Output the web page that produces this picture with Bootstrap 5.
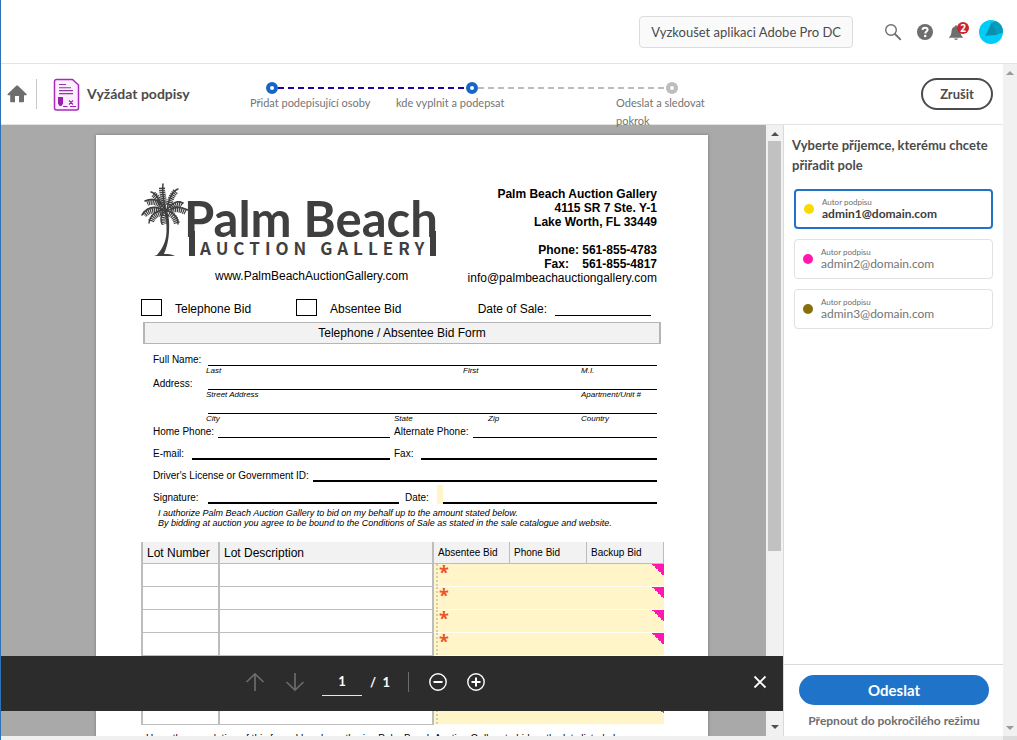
<!DOCTYPE html>
<html lang="cs">
<head>
<meta charset="utf-8">
<meta name="viewport" content="width=device-width, initial-scale=1">
<title>Vyžádat podpisy</title>
<link href="https://cdn.jsdelivr.net/npm/bootstrap@5.3.0/dist/css/bootstrap.min.css" rel="stylesheet">
<style>
  :root { --ui: Lato, "Open Sans", sans-serif; --doc: "Liberation Sans", Arial, sans-serif; --blue: #1f74c9; --line: #e3e3e3; }
  body { font-family: var(--ui); font-size: 13px; line-height: 18px; color: #4b4b4b; border-left: 1px solid #2b73b4; overflow: hidden; }
  .icon-btn { border: 0; padding: 0; background: none; line-height: 0; color: #6e6e6e; }

  /* top bar */
  .topbar { height: 64px; border-bottom: 1px solid var(--line); padding-right: 14px; gap: 15px; }
  .try-btn { height: 32px; padding: 0 11px; border: 1px solid #dcdcdc; border-radius: 4px; background: #fafafa; color: #4b4b4b; font-size: 13px; margin-right: 16px; }
  .count { top: -1px; right: -5px; width: 12px; height: 12px; border-radius: 50%; background: #c9252d; color: #fff; font: bold 10px/12px "Open Sans", sans-serif; text-align: center; }

  /* task bar */
  .taskbar { height: 61px; border-bottom: 1px solid var(--line); z-index: 2; padding: 0 10px 0 6px; }
  .divider { width: 1px; height: 30px; background: #c8c8c8; margin: 0 16px 0 9px; }
  .task-title { font-size: 14px; line-height: 18px; font-weight: 700; margin: 0 0 0 7px; width: 163px; }
  .stepper { flex: 0 1 478px; margin-top: 18px; }
  .track { padding: 0 50px 0 16px; height: 12px; }
  .dot { width: 12px; height: 12px; border-radius: 50%; border: 4px solid #1765c7; background: #fff; }
  .dot.todo { border-color: #bcbcbc; }
  .dash { height: 2px; background: repeating-linear-gradient(90deg, #1900a8 0 6px, transparent 6px 10px); }
  .dash.todo { background: repeating-linear-gradient(90deg, #bcbcbc 0 6px, transparent 6px 10px); }
  .steps { font-size: 11px; line-height: 18px; color: #747474; }
  .steps li:nth-child(1) { flex: 0 0 146px; }
  .steps li:nth-child(2) { flex: 0 0 220px; }
  .steps li:nth-child(3) { flex: 0 0 100px; }
  .cancel { height: 32px; width: 72px; border: 2px solid #4b4b4b; border-radius: 16px; background: #fff; color: #4b4b4b; font-weight: 700; font-size: 13px; padding: 0; }

  /* scrollbars */
  .bar { background: #f1f1f1; color: #505050; }
  .bar-in { width: 17px; padding: 7px 2px; }
  .bar-out { width: 14px; color: #9a9a9a; padding: 7px 0 6px; }
  .thumb { width: 13px; flex: 0 1 410px; background: #c1c1c1; margin-top: 5px; }
  .arrow-up { border: 4px solid transparent; border-top: 0; border-bottom-color: currentColor; height: 4px; }
  .arrow-down { border: 4px solid transparent; border-bottom: 0; border-top-color: currentColor; height: 4px; }
  .strip { height: 4px; background: #f0f0f0; }
  .corner { width: 14px; background: #dcdcdc; }

  /* document */
  .desk { background: #a9a9a9; padding: 10px 0 0 95px; }
  .sheet { width: 612px; background: #fff; box-shadow: 0 0 3px #777; padding: 46px 43px 60px 45px; color: #000; font: 12px/14px var(--doc); }
  .logo-word { font-family: Lato, "Open Sans", sans-serif; }
  .logo-sub { font-family: "Noto Sans CJK SC", "Noto Sans", sans-serif; }
  .site { margin: 12px 0 0 74px; }
  .contact { font-weight: 700; margin: 6px 8px 0 0; }
  .tick { appearance: none; width: 21px; height: 17px; border: 1px solid #000; background: #fff; margin: 0 13px 0 0; }
  .options { margin-top: 14px; }
  .opt { width: 155px; }
  .blank { flex: 1 1 0; min-width: 0; height: 10px; border: 0; border-bottom: 1px solid #000; padding: 0; background: none; border-radius: 0; }
  .blank.sale { flex: 0 0 96px; margin-right: 14px; }
  .thick .blank { border-bottom-width: 2px; }
  .banner { height: 22px; margin: 6px 4px 0 2px; border: 1px solid #b5b5b5; border-width: 1px 2px; background: #f2f2f2; line-height: 20px; }
  .entries { font-size: 10px; line-height: 10px; padding: 0 8px 0 12px; }
  .entries .line { display: flex; align-items: end; height: 14px; }
  .entries .line label { padding-bottom: 1px; white-space: nowrap; }
  .entries .lead-label { width: 55px; }
  .entries .tall { height: 22px; }
  .hints { font-size: 8px; line-height: 10px; height: 10px; font-style: italic; padding-left: 53px; }
  .half { width: 241px; }
  .half-wide { width: 252px; padding-right: 6px; }
  .fill-date { width: 6px; height: 19px; background: #fff5c8; }
  .terms { font-size: 9px; line-height: 10px; font-style: italic; padding-left: 17px; margin: 4px 0 0; }
  .lots { margin-top: 14px; width: 523px; table-layout: fixed; border-collapse: separate; border-spacing: 0; border-left: 2px solid #bdbdbd; }
  .lots th { height: 22px; padding: 0 0 0 4px; font-weight: 400; background: #f2f2f2; border-bottom: 1px solid #bdbdbd; }
  .lots th, .lots .plain { border-right: 2px solid #bdbdbd; }
  .lots .small-head { font-size: 10px; border-right-width: 1px; }
  .lots td { height: 23px; padding: 0; border-bottom: 1px solid #bdbdbd; }
  .lots .ask { background: linear-gradient(45deg, transparent 50%, #ff17b0 50%) right top / 12px 12px no-repeat, #fff5c8; border-bottom-color: #fffdf2; }
  .ask-in { height: 22px; margin-left: 2px; border-left: 2px dotted #d5cfae; padding: 0 0 0 1px; color: #e9552b; font: bold 18px/16px "Open Sans", sans-serif; }
  .fine { font-size: 10px; line-height: 12px; margin: 8px 0 0 5px; white-space: nowrap; }

  /* page controls over the document */
  .pager { left: 0; right: 0; bottom: 25px; height: 55px; background: #2c2c2c; color: #fff; padding: 0 16px 4px 244px; font-weight: 700; font-size: 13px; }
  .pager .icon-btn { color: #fff; }
  .pager .icon-btn:disabled { color: #6b6b6b; }
  .page-no { width: 40px; height: 27px; margin: 2px 8px 0 17px; border: 0; border-bottom: 1px solid #e6e6e6; background: none; color: #fff; text-align: center; font: inherit; padding: 0 0 3px; }
  .sep { width: 1px; height: 20px; background: #6b6b6b; margin: 0 20px 0 18px; }

  /* recipients */
  .side { width: 220px; border-left: 1px solid #dadada; background: #fff; }
  .side h2 { font-size: 13px; line-height: 20px; font-weight: 700; margin: 10px 0 14px 8px; }
  .people { padding: 0 10px; gap: 10px; }
  .person { height: 40px; border: 1px solid #e1e1e1; border-radius: 4px; background: #fff; padding: 0 8px; gap: 8px; color: #747474; font-size: 12px; line-height: 14px; }
  .person small { display: block; font-size: 8px; line-height: 10px; color: #6e6e6e; font-weight: 400; }
  .person.chosen { border: 2px solid var(--blue); color: #3c3c3c; font-weight: 700; }
  .spot { width: 10px; height: 10px; border-radius: 50%; }
  .send-area { border-top: 1px solid #dadada; padding: 10px 14px 6px 15px; height: 72px; }
  .send { height: 30px; border: 0; border-radius: 15px; background: var(--blue); color: #fff; font-size: 15px; line-height: 20px; font-weight: 700; }
  .advanced { color: #6e6e6e; font-size: 12px; font-weight: 700; line-height: 18px; margin-top: 7px; text-decoration: none; white-space: nowrap; }
</style>
</head>
<body class="vh-100 d-flex flex-column bg-white">

<header class="topbar d-flex align-items-center justify-content-end flex-shrink-0">
  <button class="try-btn" type="button">Vyzkoušet aplikaci Adobe Pro DC</button>
  <button class="icon-btn" type="button" aria-label="Hledat">
    <svg width="18" height="18" viewBox="0 0 18 18" fill="none" stroke="currentColor"><circle cx="7" cy="7" r="5.3" stroke-width="1.4"/><path d="M11 11l5.3 5.3" stroke-width="1.8" stroke-linecap="round"/></svg>
  </button>
  <button class="icon-btn" type="button" aria-label="Nápověda">
    <svg width="16" height="16" viewBox="0 0 16 16"><circle cx="8" cy="8" r="8" fill="currentColor"/><path d="M5.500 5.900C5.600 4.400 6.600 3.700 8.100 3.700c1.500 0 2.500.8 2.500 2.100 0 1.800-2.300 1.800-2.300 3.700" fill="none" stroke="#fff" stroke-width="2"/><circle cx="8.200" cy="12" r="1.300" fill="#fff"/></svg>
  </button>
  <button class="icon-btn position-relative" type="button" aria-label="Oznámení">
    <svg width="16" height="18" viewBox="0 0 16 18" fill="currentColor"><path d="M1 14.300c2-1.700 2.300-3 2.500-6C3.700 5.500 5 3.900 7 3.400c0-1.500 2-1.500 2 0 2 .5 3.300 2.100 3.500 4.900.2 3 .5 4.300 2.500 6v.4H1z"/><path d="M6 15.600h4c-.3 1.900-3.700 1.900-4 0z"/></svg>
    <span class="count position-absolute">2</span>
  </button>
  <button class="icon-btn" type="button" aria-label="Profil">
    <svg width="24" height="24" viewBox="0 0 24 24"><circle cx="12" cy="12" r="12" fill="#00cdf7"/><path d="M12.500 3l4-2.100A12 12 0 0 1 24 12.500L18 14.500 6.500 15.500z" fill="#079bbd"/><path d="M12.500 3L18 15 6.500 15.500z" fill="#0b8fae"/></svg>
  </button>
</header>

<div class="d-flex flex-grow-1 overflow-hidden">
  <div class="d-flex flex-column flex-grow-1 overflow-hidden">

    <nav class="taskbar position-relative d-flex align-items-center flex-shrink-0" aria-label="Postup">
      <button class="icon-btn" type="button" aria-label="Domů">
        <svg width="20" height="18" viewBox="0 0 20 18"><path d="M9.500.6a1 1 0 0 1 1.200 0L19.500 9c.5.500.3 1.200-.4 1.200H17v6.300c0 .5-.3.800-.8.800H12V11H8v6.300H4c-.5 0-.8-.3-.8-.8v-6.300H1.100C.4 10.200.2 9.500.7 9z" fill="currentColor"/></svg>
      </button>
      <span class="divider"></span>
      <svg width="27" height="33" viewBox="0 0 27 33"><path d="M3 1.500h16.500L25.500 7v23a2 2 0 0 1-2 2H3.500a2 2 0 0 1-2-2V3.500a2 2 0 0 1 2-2z" fill="#fdeeff" stroke="#a62bb8" stroke-width="1.500"/><path d="M6 6.500h7M6 9.700h12M6 12.600h14M6 15.600h14" stroke="#8c3aa0" stroke-width="1.100"/><path d="M5 19h5v6.500L8.500 28H6.500L5 25.500z" fill="#9c1fb3"/><path d="M10 28.500h4.500M17 28.500h6M16 22.500l4 4m0-4l-4 4" stroke="#9c1fb3" stroke-width="1.100" fill="none"/></svg>
      <h1 class="task-title">Vyžádat podpisy</h1>
      <div class="stepper align-self-start">
        <div class="track d-flex align-items-center">
          <span class="dot"></span><span class="dash flex-fill"></span><span class="dot"></span><span class="dash todo flex-fill"></span><span class="dot todo"></span>
        </div>
        <ol class="steps list-unstyled d-flex mb-0">
          <li>Přidat podepisující osoby</li><li>kde vyplnit a podepsat</li><li>Odeslat a sledovat pokrok</li>
        </ol>
      </div>
      <button class="cancel ms-auto flex-shrink-0" type="button">Zrušit</button>
    </nav>

    <div class="d-flex flex-grow-1 overflow-hidden">
      <main class="position-relative d-flex flex-grow-1 overflow-hidden">
        <div class="desk flex-grow-1 overflow-hidden">
          <article class="sheet">
            <div class="d-flex justify-content-between">
              <div>
                <svg class="d-block" width="298" height="76" viewBox="0 0 298 76" fill="#3f3f3f">
                  <path d="M16 74c6-7 9-14 9.500-23 .3-8-.5-14-2.500-21l3-1c2 7 2.600 13 2 22-.6 10-2.500 16-5 22 4 0 8 .3 11 2H13z"/>
                  <g fill="none" stroke="#3f3f3f" stroke-linecap="round">
                    <path stroke-width="1.500" d="M25 30C18 18 12 17 4 20M24 30C14 24 6 26 1 34M24 30C16 28 9 34 8 42M25 30C20 32 19 38 21 43M25 30C22 18 21 10 22 3M26 29C28 16 32 10 37 8M26 29C32 21 38 19 42 22M26 30C34 25 41 26 47 29M26 30C32 31 37 36 37 43M24 29C19 20 15 12 10 11"/>
                    <path stroke-width="6" stroke-dasharray="1.300 .700" stroke-linecap="butt" d="M23 27C16 20 11 20 6 22M22 30C13 27 7 30 3 34M22 32C15 32 11 37 10 41M26 33C23 36 23 40 24 43M24 24C22 16 21 11 21 6M28 24C30 16 32 13 35 10M29 27C34 23 38 22 41 24M30 29C36 27 41 29 45 31M28 32C32 34 35 38 36 43M22 25C18 19 15 15 12 13"/>
                  </g>
                  <g font-weight="700">
                    <text class="logo-word" x="43" y="56" font-size="49">Palm Beach</text>
                    <text class="logo-sub" x="59" y="74" font-size="17" letter-spacing="5">AUCTION GALLERY</text>
                  </g>
                  <path d="M48 50h6v25h-6zM289 50h6v25h-6z"/>
                </svg>
                <div class="site">www.PalmBeachAuctionGallery.com</div>
              </div>
              <address class="contact text-end mb-0">
                Palm Beach Auction Gallery<br>4115 SR 7 Ste. Y-1<br>Lake Worth, FL 33449<br><br>Phone: 561-855-4783<br>Fax: &nbsp;&nbsp; 561-855-4817<br><span class="fw-normal">info@palmbeachauctiongallery.com</span>
              </address>
            </div>
            <div class="options d-flex align-items-end">
              <label class="opt d-flex align-items-end" for="tel"><input class="tick" id="tel" type="checkbox">Telephone Bid</label>
              <label class="opt d-flex align-items-end" for="abs"><input class="tick" id="abs" type="checkbox">Absentee Bid</label>
              <label class="ms-auto pe-2" for="sale">Date of Sale:</label>
              <input class="blank sale" id="sale" type="text">
            </div>
            <div class="banner text-center">Telephone / Absentee Bid Form</div>

            <div class="entries">
              <div class="line tall"><label class="lead-label" for="name">Full Name:</label><input class="blank" id="name" type="text"></div>
              <div class="hints d-flex"><span style="width:257px">Last</span><span style="width:118px">First</span><span>M.I.</span></div>
              <div class="line"><label class="lead-label" for="street">Address:</label><input class="blank" id="street" type="text"></div>
              <div class="hints d-flex"><span style="width:375px">Street Address</span><span>Apartment/Unit #</span></div>
              <div class="line"><span class="lead-label"></span><input class="blank" type="text" aria-label="City"></div>
              <div class="hints d-flex"><span style="width:188px">City</span><span style="width:94px">State</span><span style="width:93px">Zip</span><span>Country</span></div>
              <div class="line"><div class="half line pe-1"><label class="pe-1" for="home">Home Phone:</label><input class="blank" id="home" type="text"></div><label class="pe-1" for="alt">Alternate Phone:</label><input class="blank" id="alt" type="text"></div>
              <div class="line tall thick"><div class="half line pe-1"><label class="pe-2" for="mail">E-mail:</label><input class="blank" id="mail" type="text"></div><label class="pe-2" for="fax">Fax:</label><input class="blank" id="fax" type="text"></div>
              <div class="line tall thick"><label class="pe-1" for="gov">Driver's License or Government ID:</label><input class="blank" id="gov" type="text"></div>
              <div class="line tall thick"><div class="half-wide line"><label class="lead-label" for="sign">Signature:</label><input class="blank" id="sign" type="text"></div><label class="pe-2" for="day">Date:</label><span class="fill-date"></span><input class="blank" id="day" type="text"></div>
            </div>
            <p class="terms">I authorize Palm Beach Auction Gallery to bid on my behalf up to the amount stated below.<br>By bidding at auction you agree to be bound to the Conditions of Sale as stated in the sale catalogue and website.</p>

            <table class="lots">
              <colgroup><col style="width:77px"><col style="width:214px"><col style="width:76px"><col style="width:77px"><col></colgroup>
              <thead><tr><th>Lot Number</th><th>Lot Description</th><th class="small-head">Absentee Bid</th><th class="small-head">Phone Bid</th><th class="small-head">Backup Bid</th></tr></thead>
              <tbody>
                <tr><td class="plain"></td><td class="plain"></td><td class="ask" colspan="3"><div class="ask-in">*</div></td></tr>
                <tr><td class="plain"></td><td class="plain"></td><td class="ask" colspan="3"><div class="ask-in">*</div></td></tr>
                <tr><td class="plain"></td><td class="plain"></td><td class="ask" colspan="3"><div class="ask-in">*</div></td></tr>
                <tr><td class="plain"></td><td class="plain"></td><td class="ask" colspan="3"><div class="ask-in">*</div></td></tr>
                <tr><td class="plain"></td><td class="plain"></td><td class="ask" colspan="3"><div class="ask-in">*</div></td></tr>
                <tr><td class="plain"></td><td class="plain"></td><td class="ask" colspan="3"><div class="ask-in">*</div></td></tr>
                <tr><td class="plain"></td><td class="plain"></td><td class="ask" colspan="3"><div class="ask-in">*</div></td></tr>
              </tbody>
            </table>
            <p class="fine">Upon the completion of this form, I hereby authorize Palm Beach Auction Gallery to bid on the lots listed above.</p>
          </article>
        </div>
        <div class="bar bar-in d-flex flex-column align-items-center flex-shrink-0">
          <span class="arrow-up"></span><span class="thumb"></span><span class="arrow-down mt-auto"></span>
        </div>

        <div class="pager position-absolute d-flex align-items-center">
          <button class="icon-btn" type="button" disabled aria-label="Předchozí stránka"><svg width="20" height="20" viewBox="0 0 20 20" fill="none" stroke="currentColor" stroke-width="1.700"><path d="M10 19V2M1.500 10L10 2l8.500 8"/></svg></button>
          <button class="icon-btn ms-3 ps-1" type="button" disabled aria-label="Další stránka"><svg width="20" height="20" viewBox="0 0 20 20" fill="none" stroke="currentColor" stroke-width="1.700"><path d="M10 1v17M1.500 10l8.500 8 8.500-8"/></svg></button>
          <input class="page-no" type="text" value="1" aria-label="Stránka"><span>/&nbsp; 1</span>
          <span class="sep"></span>
          <button class="icon-btn" type="button" aria-label="Zmenšit"><svg width="18" height="18" viewBox="0 0 18 18" fill="none" stroke="currentColor"><circle cx="9" cy="9" r="8.200" stroke-width="1.400"/><path d="M4.500 9h9" stroke-width="2"/></svg></button>
          <button class="icon-btn ms-3 ps-1" type="button" aria-label="Zvětšit"><svg width="18" height="18" viewBox="0 0 18 18" fill="none" stroke="currentColor"><circle cx="9" cy="9" r="8.200" stroke-width="1.400"/><path d="M4.500 9h9M9 4.500v9" stroke-width="2"/></svg></button>
          <button class="icon-btn ms-auto" type="button" aria-label="Zavřít"><svg width="14" height="14" viewBox="0 0 14 14" fill="none" stroke="currentColor" stroke-width="1.800"><path d="M1.500 1.500l11 11m0-11l-11 11"/></svg></button>
        </div>
      </main>

      <aside class="side d-flex flex-column flex-shrink-0">
        <h2>Vyberte příjemce, kterému chcete přiřadit pole</h2>
        <div class="people d-flex flex-column">
          <button class="person chosen d-flex align-items-center text-start" type="button"><span class="spot" style="background:#fada00"></span><span><small>Autor podpisu</small>admin1@domain.com</span></button>
          <button class="person d-flex align-items-center text-start" type="button"><span class="spot" style="background:#ff17b0"></span><span><small>Autor podpisu</small>admin2@domain.com</span></button>
          <button class="person d-flex align-items-center text-start" type="button"><span class="spot" style="background:#86700a"></span><span><small>Autor podpisu</small>admin3@domain.com</span></button>
        </div>
        <div class="send-area mt-auto d-flex flex-column">
          <button class="send w-100" type="button">Odeslat</button>
          <a class="advanced text-center" href="#">Přepnout do pokročilého režimu</a>
        </div>
      </aside>
    </div>
    <div class="strip flex-shrink-0"></div>
  </div>
  <div class="d-flex flex-column flex-shrink-0">
    <div class="bar bar-out d-flex flex-column align-items-center flex-grow-1"><span class="arrow-up"></span><span class="arrow-down mt-auto"></span></div>
    <div class="strip corner"></div>
  </div>
</div>

<script src="https://cdn.jsdelivr.net/npm/bootstrap@5.3.0/dist/js/bootstrap.bundle.min.js"></script>
</body>
</html>
